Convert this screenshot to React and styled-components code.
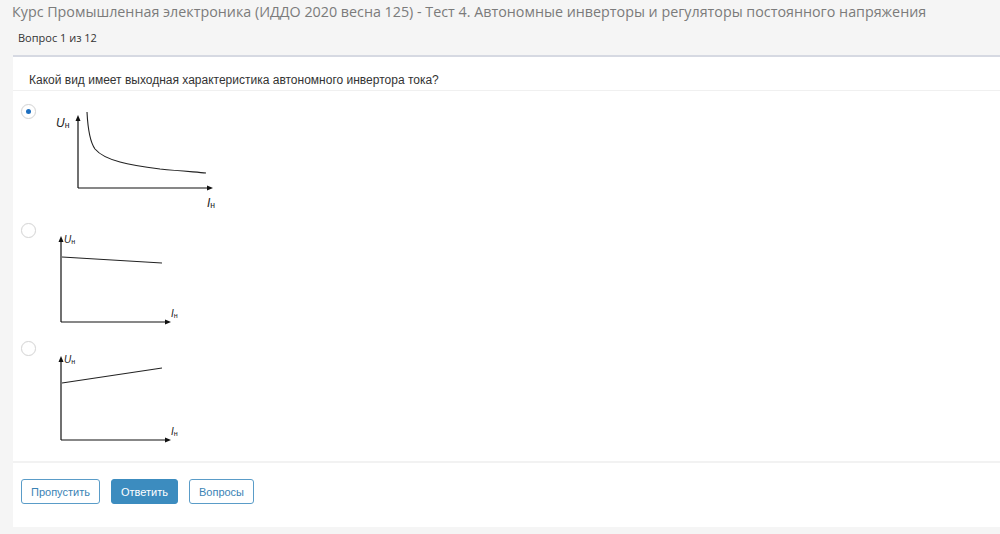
import React from 'react';
import styled, { createGlobalStyle } from 'styled-components';

const Global = createGlobalStyle`
  body {
    margin: 0;
    background: #f5f5f5;
    font-family: "Liberation Sans", Arial, sans-serif;
  }
`;

const Page = styled.div`
  width: 1000px;
  height: 534px;
  overflow: hidden;
`;

const Title = styled.div`
  padding: 2px 0 0 12px;
  font-family: "Open Sans", sans-serif;
  font-size: 14.3px;
  line-height: 20px;
  color: #7b7b7b;
  white-space: nowrap;
`;

const Sub = styled.div`
  padding: 8px 0 0 18px;
  height: 25px;
  font-family: "Open Sans", sans-serif;
  font-size: 11px;
  line-height: 16px;
  color: #333;
`;

const Card = styled.div`
  margin-left: 13px;
  background: #fff;
  border-top: 2px solid #d6d9e2;
  height: 470px;
`;

const Question = styled.div`
  height: 34px;
  box-sizing: border-box;
  padding: 0 0 3px 16px;
  display: flex;
  align-items: flex-end;
  font-size: 12px;
  color: #333;
  border-bottom: 1px solid #f0f0f0;
`;

const Options = styled.div`
  padding: 8px 0 0 8px;
  height: 362px;
`;

const Option = styled.label`
  display: flex;
  align-items: flex-start;
  gap: 14px;
  height: ${p => p.$h}px;
`;

const Radio = styled.span`
  margin-top: 5px;
  width: 15px;
  height: 15px;
  box-sizing: border-box;
  border-radius: 50%;
  border: 1px solid #d6d6d6;
  box-shadow: 0 0 1px rgba(0, 0, 0, 0.08);
  background: #fff;
  display: flex;
  align-items: center;
  justify-content: center;
  flex-shrink: 0;
  &::after {
    content: '';
    width: 5px;
    height: 5px;
    border-radius: 50%;
    background: ${p => (p.$checked ? '#1d6fc0' : 'transparent')};
  }
`;

const Footer = styled.div`
  border-top: 2px solid #f2f2f2;
  padding: 16px 0 0 8px;
  display: flex;
  gap: 11px;
`;

const Button = styled.button`
  height: 25px;
  padding: 0 9px;
  border-radius: 3px;
  font-family: "Liberation Sans", Arial, sans-serif;
  font-size: 11px;
  border: 1px solid ${p => (p.$primary ? '#3c8cbf' : '#5a9cc8')};
  background: ${p => (p.$primary ? '#3c8cbf' : '#fff')};
  color: ${p => (p.$primary ? '#fff' : '#3a83b5')};
`;

const Arrow = ({ x, y, dir }) =>
  dir === 'up' ? (
    <polygon points={`${x - 2.5},${y + 6} ${x + 2.5},${y + 6} ${x},${y}`} fill="#111" />
  ) : (
    <polygon points={`${x - 6},${y - 2.5} ${x - 6},${y + 2.5} ${x},${y}`} fill="#111" />
  );

const Label = ({ x, y, l, size = 11 }) => (
  <text x={x} y={y} fontFamily="Liberation Sans, Arial, sans-serif" fontSize={size} fill="#222">
    <tspan fontStyle="italic">{l}</tspan>
    <tspan fontSize={size * 0.72} dy="1">н</tspan>
  </text>
);

const Graph1 = () => (
  <svg width="175" height="118" viewBox="0 0 175 118">
    <line x1="28" y1="20" x2="28" y2="89" stroke="#111" strokeWidth="1.2" />
    <line x1="28" y1="89" x2="158" y2="89" stroke="#111" strokeWidth="1.2" />
    <Arrow x={28} y={16} dir="up" />
    <Arrow x={163} y={89} dir="right" />
    <path d="M37,13 C38,33 40,43 45,50 C55,62 80,66 110,70 C130,72 145,73 156,74" fill="none" stroke="#222" strokeWidth="1.1" />
    <Label x={6} y={28} l="U" size={12} />
    <Label x={157} y={108} l="I" size={12} />
  </svg>
);

const Graph = ({ y1, y2, uy }) => (
  <svg width="135" height="112" viewBox="0 0 135 112">
    <line x1="11" y1={uy + 2} x2="11" y2="104" stroke="#111" strokeWidth="1.2" />
    <line x1="11" y1="104" x2="116" y2="104" stroke="#111" strokeWidth="1.2" />
    <Arrow x={11} y={uy - 2} dir="up" />
    <Arrow x={121} y={104} dir="right" />
    <line x1="12" y1={y1} x2="112" y2={y2} stroke="#222" strokeWidth="1.1" />
    <Label x={14} y={uy + 5} l="U" size={10} />
    <Label x={121} y={99} l="I" size={10} />
  </svg>
);

export default function App() {
  return (
    <Page>
      <Global />
      <Title>
        Курс Промышленная электроника (ИДДО 2020 весна 125) - Тест 4. Автономные инверторы и регуляторы постоянного напряжения
      </Title>
      <Sub>Вопрос 1 из 12</Sub>
      <Card>
        <Question>Какой вид имеет выходная характеристика автономного инвертора тока?</Question>
        <Options>
          <Option $h={119}>
            <Radio $checked />
            <Graph1 />
          </Option>
          <Option $h={118}>
            <Radio />
            <Graph y1={39} y2={45} uy={20} />
          </Option>
          <Option $h={118}>
            <Radio />
            <Graph y1={47} y2={32} uy={22} />
          </Option>
        </Options>
        <Footer>
          <Button>Пропустить</Button>
          <Button $primary>Ответить</Button>
          <Button>Вопросы</Button>
        </Footer>
      </Card>
    </Page>
  );
}
